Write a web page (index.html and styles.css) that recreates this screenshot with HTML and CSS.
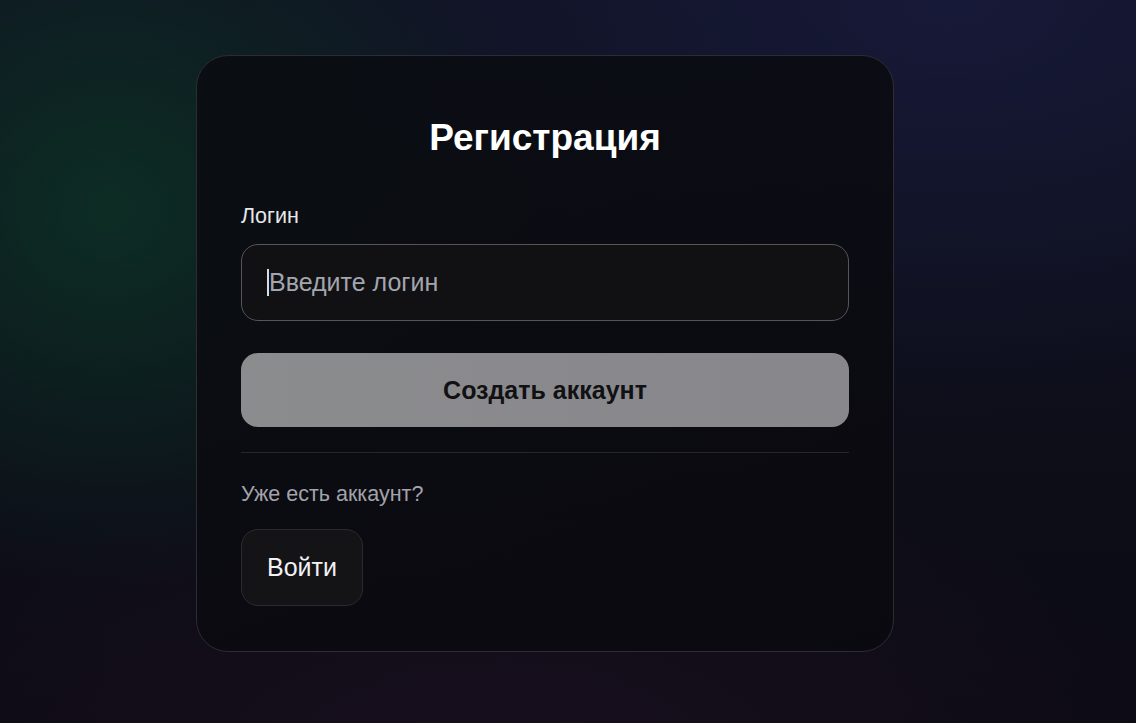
FILE: index.html
```html
<!DOCTYPE html>
<html lang="ru">
<head>
<meta charset="utf-8">
<title>Регистрация</title>
<link rel="stylesheet" href="styles.css">
</head>
<body>
<div class="page">
  <div class="card">
    <h1 class="title">Регистрация</h1>
    <form class="form">
      <label class="label" for="login">Логин</label>
      <div class="input"><span class="caret"></span><span class="placeholder">Введите логин</span></div>
      <button type="button" class="primary">Создать аккаунт</button>
    </form>
    <div class="divider"></div>
    <p class="hint">Уже есть аккаунт?</p>
    <button type="button" class="secondary">Войти</button>
  </div>
</div>
</body>
</html>
```

FILE: styles.css
```css
* { box-sizing: border-box; }
html, body { margin: 0; padding: 0; height: 100%; }
body {
  font-family: "Liberation Sans", Arial, sans-serif;
  color: #fff;
  background-color: #0d0c15;
  background-image:
    radial-gradient(ellipse 420px 380px at 110px 210px, rgba(12, 52, 38, 0.8), rgba(12, 52, 38, 0) 100%),
    radial-gradient(ellipse 700px 420px at 950px 0px, rgba(24, 26, 60, 0.85), rgba(24, 26, 60, 0) 100%),
    radial-gradient(ellipse 700px 300px at 500px 760px, rgba(30, 16, 34, 0.7), rgba(30, 16, 34, 0) 100%),
    linear-gradient(180deg, #0f1220 0%, #0c0b14 100%);
  overflow: hidden;
}
.page {
  display: flex;
  padding: 55px 0 0 196px;
}
.card {
  width: 698px;
  height: 597px;
  border: 1px solid #2c2c32;
  border-radius: 32px;
  background: linear-gradient(160deg, rgba(10, 13, 18, 0.92), rgba(11, 9, 16, 0.92));
  padding: 62px 44px 44px;
  display: flex;
  flex-direction: column;
}
.title {
  margin: 0;
  text-align: center;
  font-size: 37px;
  line-height: 40px;
  font-weight: 700;
  color: #fff;
}
.form {
  display: flex;
  flex-direction: column;
  margin-top: 46px;
}
.label {
  font-size: 21.5px;
  line-height: 24px;
  color: #e8e8ea;
}
.input {
  margin-top: 16px;
  height: 77px;
  border: 1px solid #55555a;
  border-radius: 17px;
  background: #111114;
  display: flex;
  align-items: center;
  padding-left: 25px;
}
.caret {
  width: 2px;
  height: 27px;
  background: #d8dce6;
}
.placeholder {
  font-size: 25px;
  color: #a2a6ae;
}
.primary {
  margin-top: 32px;
  height: 74px;
  border: none;
  border-radius: 17px;
  background: linear-gradient(90deg, #8b8c8e, #88878c);
  font-family: "Liberation Sans", Arial, sans-serif;
  font-size: 25px;
  font-weight: 700;
  color: #111113;
}
.divider {
  margin-top: 25px;
  height: 1px;
  background: #26262b;
}
.hint {
  margin: 29px 0 0;
  font-size: 21.5px;
  line-height: 24px;
  color: #a3a3ab;
}
.secondary {
  margin-top: 23px;
  align-self: flex-start;
  width: 122px;
  height: 77px;
  border: 1px solid #2a2a2f;
  border-radius: 17px;
  background: #141417;
  font-family: "Liberation Sans", Arial, sans-serif;
  font-size: 25px;
  color: #f2f2f4;
}
```
